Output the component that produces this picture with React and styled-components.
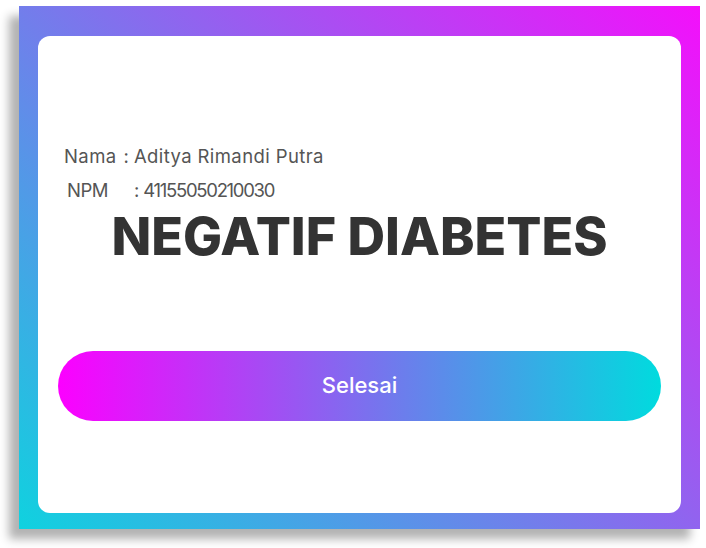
import React from "react";
import styled, { createGlobalStyle } from "styled-components";

const GlobalStyle = createGlobalStyle`
  html, body {
    margin: 0;
    padding: 0;
    background: #ffffff;
  }
  body {
    font-family: Inter, "Liberation Sans", Arial, sans-serif;
  }
  * { box-sizing: border-box; }
`;

const Page = styled.div`
  width: 706px;
  height: 548px;
  padding: 6px 0 0 19px;
`;

const Frame = styled.div`
  width: 681px;
  height: 523px;
  padding: 30px 19px 16px 19px;
  background: linear-gradient(45deg, #0fd2df, #f40ffb);
  box-shadow: -10px 10px 9px rgba(0, 0, 0, 0.3);
  display: flex;
`;

const Card = styled.div`
  flex: 1;
  background: #ffffff;
  border-radius: 12px;
  padding: 108px 20px 0 20px;
  display: flex;
  flex-direction: column;
`;

const Info = styled.div`
  padding-left: 6px;
  display: flex;
  flex-direction: column;
  gap: 9.5px;
`;

const Row = styled.div`
  display: flex;
  align-items: baseline;
  font-size: 18.5px;
  line-height: 24px;
  color: #555555;
  padding-left: ${(p) => p.$indent || 0}px;
  white-space: pre;
`;

const Label = styled.span`
  letter-spacing: ${(p) => p.$spacing ?? 0.4}px;
  margin-right: ${(p) => p.$gap}px;
`;

const Colon = styled.span`
  margin-right: ${(p) => p.$gap}px;
`;

const Value = styled.span`
  letter-spacing: ${(p) => p.$spacing ?? 0.4}px;
`;

const Title = styled.h1`
  margin: 8.5px 0 0 0;
  text-align: center;
  font-size: 52px;
  line-height: 54px;
  font-weight: 800;
  color: #333333;
  letter-spacing: 0;
`;

const Button = styled.button`
  margin-top: 87px;
  height: 70px;
  width: 100%;
  border: none;
  border-radius: 35px;
  background: linear-gradient(to right, #fc00ff, #00dbde);
  color: #ffffff;
  font-family: Inter, "Liberation Sans", Arial, sans-serif;
  font-size: 22px;
  font-weight: 500;
  display: flex;
  align-items: center;
  justify-content: center;
  padding: 0 0 3px 0;
  cursor: pointer;
`;

export default function App() {
  return (
    <>
      <GlobalStyle />
      <Page>
        <Frame>
          <Card>
            <Info>
              <Row>
                <Label $gap={7}>Nama</Label>
                <Colon $gap={5}>:</Colon>
                <Value>Aditya Rimandi Putra</Value>
              </Row>
              <Row $indent={3}>
                <Label $gap={26} $spacing={-0.5}>NPM</Label>
                <Colon $gap={4}>:</Colon>
                <Value $spacing={-1.3}>41155050210030</Value>
              </Row>
            </Info>
            <Title>NEGATIF DIABETES</Title>
            <Button>Selesai</Button>
          </Card>
        </Frame>
      </Page>
    </>
  );
}
